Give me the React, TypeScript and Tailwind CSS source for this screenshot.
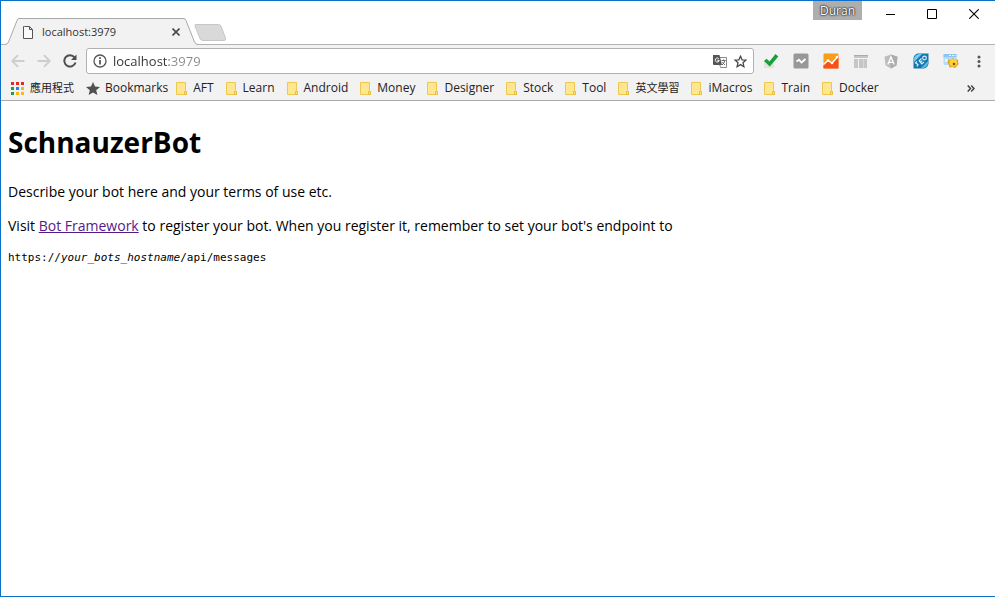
import type { ReactNode } from "react";

const folders = [
  "AFT",
  "Learn",
  "Android",
  "Money",
  "Designer",
  "Stock",
  "Tool",
  "英文學習",
  "iMacros",
  "Train",
  "Docker",
];

const appDots = [
  "#ea2a1c", "#ea2a1c", "#ea2a1c",
  "#1e9e4a", "#2f7de1", "#fbb714",
  "#1e9e4a", "#fbb714", "#fbb714",
];

function AppsIcon() {
  return (
    <svg width="13" height="13" viewBox="0 0 13 13">
      {appDots.map((fill, i) => (
        <rect key={i} x={(i % 3) * 5} y={Math.floor(i / 3) * 5} width="3" height="3" fill={fill} />
      ))}
    </svg>
  );
}

function FolderIcon() {
  return (
    <svg width="11" height="13" viewBox="0 0 11 13">
      <path d="M.5 .5H9.500V8.500L10.500 9.500V12.500H.5Z" fill="#ffe693" stroke="#eec84c" />
      <path d="M8.500 12.500V9.500H10.500V12.500Z" fill="#ffe28a" stroke="#e8be3c" />
    </svg>
  );
}

function ReloadIcon() {
  return (
    <svg width="14" height="14" viewBox="0 0 14 14">
      <path d="M11.500 3.300A5.700 5.700 0 1 0 12.500 8.500" fill="none" stroke="#4e4e4e" strokeWidth="2" />
      <path d="M13.500 .5V6H8Z" fill="#4e4e4e" />
    </svg>
  );
}

function ArrowIcon({ flip }: { flip?: boolean }) {
  return (
    <svg width="14" height="14" viewBox="0 0 14 14" className={flip ? "rotate-180" : ""}>
      <path d="M13.500 7H1.500M7 1.200L1.200 7L7 12.800" fill="none" stroke="#cdcdcd" strokeWidth="1.800" />
    </svg>
  );
}

function TranslateIcon() {
  return (
    <svg width="14" height="13" viewBox="0 0 14 13">
      <path d="M5 2.500H13.500V12.500H7.500Z" fill="#fff" stroke="#8a8a8a" />
      <path d="M8.500 5.500H12.500M10.500 4.500V5.500M12 5.500Q11.500 8 9 10M9.500 7Q10.500 9 12 10" fill="none" stroke="#666" />
      <path d="M0 0H6.500L9 10H1Q0 10 0 9Z" fill="#555" />
      <path d="M5.800 3.800A2 2 0 1 0 6.200 5.300H4.200" fill="none" stroke="#fff" />
    </svg>
  );
}

function SafetyCheckIcon() {
  return (
    <svg width="16" height="16" viewBox="0 0 16 16">
      <path d="M1 7H11V15H1Z" fill="#e5e1d6" />
      <path d="M1 8L3.500 5.700L6.500 8.500L12.500 1L15.300 3.500L6.800 13.500Z" fill="#16a03a" />
    </svg>
  );
}

function GreySquare() {
  return (
    <svg width="16" height="16" viewBox="0 0 16 16">
      <rect x=".5" y=".5" width="15" height="15" rx="1.500" fill="#989898" />
      <path d="M3.500 8.500L6 6.800L8.500 9.500L12.500 6" fill="none" stroke="#fff" strokeWidth="1.800" />
    </svg>
  );
}

function AnalyticsIcon() {
  return (
    <svg width="16" height="16" viewBox="0 0 16 16">
      <rect x=".5" y=".5" width="15" height="15" rx="1" fill="#f89c1c" />
      <path d="M.5 12L5 8L9 10.500L15.500 3V15.500H.5Z" fill="#f4511e" />
      <path d="M.5 11.500L5 7.500L9 10L15 3.500" fill="none" stroke="#fff" strokeWidth="1.400" />
      <circle cx="5" cy="7.500" r="1.300" fill="#fff" />
      <circle cx="9" cy="10" r="1.300" fill="#fff" />
      <circle cx="14" cy="4" r="1.300" fill="#fff" />
    </svg>
  );
}

function TableIcon() {
  return (
    <svg width="14" height="14" viewBox="0 0 14 14" fill="#c6c6c6">
      <path d="M0 1H14V4H0ZM0 5H4V14H0ZM5 5H13V14H5Z" />
      <path d="M0 1H14V2H0Z" fill="#ababab" />
      <path d="M9 5H10V14H9Z" fill="#d6d6d6" />
    </svg>
  );
}

function ShieldIcon() {
  return (
    <svg width="14" height="15" viewBox="0 0 14 15">
      <path d="M7 .5L13.500 2.700L12.500 11.300L7 14.500L1.500 11.300L.5 2.700Z" fill="#bcbcbc" />
      <path d="M7 .5L13.500 2.700L12.500 11.300L7 14.500Z" fill="#acacac" />
      <path d="M3.800 10.500L7 3L10.200 10.500M5 8.300H9" fill="none" stroke="#fff" strokeWidth="1.300" />
    </svg>
  );
}

function SeoIcon() {
  return (
    <svg width="16" height="16" viewBox="0 0 16 16">
      <path d="M4.500 .5H15.500V10.500Q15 14.500 11 15.500H.5V5Q1 1.500 4.500 .5Z" fill="#1277b0" />
      <path d="M1 6Q1.500 2 6 1H9L1 9Z" fill="#7accea" />
      <path d="M8 15L15 8V10.500Q14 14 10.500 15Z" fill="#58b8de" />
      <path d="M4 8.500L2.500 10L5 11.500L4 13.500M8.500 5.500L6.200 7.800L8.800 11L11 9M7.500 9.200L9.200 7.800" fill="none" stroke="#d8eef8" strokeWidth="1.200" />
      <circle cx="11.500" cy="5" r="1.800" fill="none" stroke="#d8eef8" strokeWidth="1.200" />
    </svg>
  );
}

function WindowGearIcon() {
  return (
    <svg width="16" height="16" viewBox="0 0 16 16">
      <rect x=".5" y="1" width="13" height="11" rx="1" fill="#b4dbf8" />
      <path d="M.5 1H13.500V4H.5Z" fill="#8cc4f2" />
      <path d="M6 2.500H8M9 2.500H10.500M11.500 2.500H12.500" stroke="#fff" />
      <path d="M2 6H5V9H2Z" fill="#eaf5fd" />
      <path d="M5 6.500L7.500 7L10 5L12 6.500L15 6.500L15 9L15.700 11L14 13L12 15L9.500 14L6.500 14.500L6 12L4.500 9.500Z" fill="#e0a41c" />
      <circle cx="10.300" cy="9.800" r="3.800" fill="#ffd236" />
      <circle cx="11" cy="11" r="1.300" fill="#7a5510" />
    </svg>
  );
}

const extensions: { name: string; icon: ReactNode }[] = [
  { name: "Safety check", icon: <SafetyCheckIcon /> },
  { name: "Activity", icon: <GreySquare /> },
  { name: "Page analytics", icon: <AnalyticsIcon /> },
  { name: "Table layout", icon: <TableIcon /> },
  { name: "Angular", icon: <ShieldIcon /> },
  { name: "SEO", icon: <SeoIcon /> },
  { name: "Site settings", icon: <WindowGearIcon /> },
];

function TabStrip() {
  return (
    <div className="flex h-11 items-end border-b border-[#b3b3b3] bg-white pl-1">
      <div className="-mb-px flex h-[27px]">
        <svg width="14" height="27" viewBox="0 0 14 27">
          <path d="M0 26.500Q2.500 26.500 3.500 24L12 2.500Q12.800 .5 14 .5V27H0Z" fill="#f2f2f2" />
          <path d="M0 26.500Q2.500 26.500 3.500 24L12 2.500Q12.800 .5 14 .5" fill="none" stroke="#a8a8a8" />
        </svg>
        <div className="flex w-[165px] items-center border-t border-[#a8a8a8] bg-[#f2f2f2] pl-1">
          <svg width="11" height="13" viewBox="0 0 11 13" className="mr-2 shrink-0">
            <path d="M1.500 .5H6.500L9.500 3.500V12.500H.5V.5ZM6.500 .5V3.500H9.500" fill="#fafafa" stroke="#555" />
          </svg>
          <span className="flex-1 text-[11px] leading-4 text-[#333]">localhost:3979</span>
          <button type="button" aria-label="Close tab" className="mr-1">
            <svg width="8" height="8" viewBox="0 0 8 8">
              <path d="M.5 .5L7.500 7.500M7.500 .5L.5 7.500" stroke="#4a4a4a" strokeWidth="1.600" />
            </svg>
          </button>
        </div>
        <svg width="14" height="27" viewBox="0 0 14 27">
          <path d="M14 26.500Q11.500 26.500 10.500 24L2 2.500Q1.200 .5 0 .5V27H14Z" fill="#f2f2f2" />
          <path d="M14 26.500Q11.500 26.500 10.500 24L2 2.500Q1.200 .5 0 .5" fill="none" stroke="#a8a8a8" />
        </svg>
      </div>
      <button type="button" aria-label="New tab" className="-ml-1 mb-[3px]">
        <svg width="33" height="17" viewBox="0 0 33 17">
          <path d="M2 .5H24.500Q26 .5 27 2L31.500 14Q32 16.500 30.500 16.500H9Q7 16.500 6 14.500L1 2Q.5 .5 2 .5Z" fill="#d9d9d9" stroke="#c6c6c6" />
        </svg>
      </button>
      <div className="ml-auto flex items-start self-start">
        <button
          type="button"
          className="mr-[7px] h-[19px] w-[49px] bg-[#aeaeae] text-[12px] leading-5 text-white [text-shadow:0_0_2px_#222,0_0_2px_#222,0_0_1px_#333]"
        >
          Duran
        </button>
        <button type="button" aria-label="Minimize" className="flex h-[26px] w-[42px] items-center justify-center">
          <svg width="9" height="9" viewBox="0 0 9 9"><path d="M0 4.500H9" stroke="#000" /></svg>
        </button>
        <button type="button" aria-label="Maximize" className="flex h-[26px] w-[42px] items-center justify-center">
          <svg width="10" height="10" viewBox="0 0 10 10"><path d="M.5 .5H9.500V9.500H.5Z" fill="none" stroke="#000" /></svg>
        </button>
        <button type="button" aria-label="Close" className="flex h-[26px] w-[42px] items-center justify-center">
          <svg width="10" height="10" viewBox="0 0 10 10"><path d="M.3 .3L9.700 9.700M9.700 .3L.3 9.700" stroke="#000" strokeWidth="1.100" /></svg>
        </button>
      </div>
    </div>
  );
}

function Toolbar() {
  return (
    <div className="flex h-8 items-center pr-[14px] pl-[10px]">
      <div className="flex gap-3">
        <button type="button" aria-label="Back"><ArrowIcon /></button>
        <button type="button" aria-label="Forward"><ArrowIcon flip /></button>
        <button type="button" aria-label="Reload"><ReloadIcon /></button>
      </div>
      <div className="ml-[9px] flex h-[26px] flex-1 items-center rounded-[3px] border border-[#b0b0b0] bg-white px-[6px]">
        <svg width="14" height="14" viewBox="0 0 14 14" className="mr-[6px]">
          <circle cx="7" cy="7" r="6" fill="none" stroke="#555" strokeWidth="1.300" />
          <path d="M7 6V10.500M7 3.300V4.900" stroke="#444" strokeWidth="1.600" />
        </svg>
        {/* the host is dark, the port after it is grey */}
        <input
          type="text"
          aria-label="Address"
          defaultValue="localhost:3979"
          className="min-w-0 flex-1 bg-[linear-gradient(90deg,#333_56px,#8a8a8a_56px)] bg-clip-text text-[13px] leading-5 text-transparent caret-black outline-none"
        />
        <button type="button" aria-label="Translate" className="mr-[7px]"><TranslateIcon /></button>
        <button type="button" aria-label="Bookmark this page">
          <svg width="13" height="13" viewBox="0 0 13 13">
            <path d="M6.500 1.200L8.100 4.800L12 5.100L9 7.700L9.900 11.700L6.500 9.600L3.100 11.700L4 7.700L1 5.100L4.900 4.800Z" fill="none" stroke="#4a4a4a" strokeWidth="1.300" />
          </svg>
        </button>
      </div>
      <div className="ml-[9px] flex gap-[14px]">
        {extensions.map((ext) => (
          <button key={ext.name} type="button" aria-label={ext.name} className="flex h-4 w-4 items-center justify-center">
            {ext.icon}
          </button>
        ))}
      </div>
      <button type="button" aria-label="Menu" className="ml-[18px]">
        <svg width="4" height="13" viewBox="0 0 4 13" fill="#555">
          <circle cx="2" cy="2" r="1.500" />
          <circle cx="2" cy="6.500" r="1.500" />
          <circle cx="2" cy="11" r="1.500" />
        </svg>
      </button>
    </div>
  );
}

function BookmarksBar() {
  return (
    <nav className="flex h-6 items-center border-b border-[#aaa] pb-px pl-[10px] text-[12px] leading-4 whitespace-nowrap text-[#222]">
      <a href="#apps" className="flex items-center gap-[6px] text-[11px]">
        <AppsIcon />
        應用程式
      </a>
      <a href="#bookmarks" className="ml-3 flex items-center gap-[5px]">
        <svg width="14" height="13" viewBox="0 0 14 13">
          <path d="M7 0L9 4.600L14 5L10.200 8.200L11.400 13L7 10.400L2.600 13L3.800 8.200L0 5L5 4.600Z" fill="#505050" />
        </svg>
        Bookmarks
      </a>
      <div className="ml-2 flex items-center gap-3">
        {folders.map((name) => (
          <a
            key={name}
            href={`#${name}`}
            className={name === "英文學習" ? "flex items-center gap-[6px] text-[11px]" : "flex items-center gap-[6px]"}
          >
            <FolderIcon />
            {name}
          </a>
        ))}
      </div>
      <button type="button" aria-label="More bookmarks" className="mr-5 ml-auto">
        <svg width="8" height="7" viewBox="0 0 8 7">
          <path d="M.7 .5L3.500 3.500L.7 6.500M4.200 .5L7 3.500L4.200 6.500" fill="none" stroke="#444" strokeWidth="1.500" />
        </svg>
      </button>
    </nav>
  );
}

export default function App() {
  return (
    <div className="flex min-h-screen flex-col border border-r-0 border-[#0a70ca] bg-white font-['Open_Sans','Noto_Sans_CJK_TC',sans-serif]">
      <header className="bg-[#f2f2f2]">
        <TabStrip />
        <Toolbar />
        <BookmarksBar />
      </header>
      <main className="flex-1 px-[7px] pt-[21px] text-black">
        <h1 className="text-[28px] leading-10 font-bold">SchnauzerBot</h1>
        <p className="mt-5 text-[14px] leading-5">Describe your bot here and your terms of use etc.</p>
        <p className="mt-[14px] text-[14px] leading-5">
          Visit{" "}
          <a href="#bot-framework" className="text-[#551a8b] underline">
            Bot Framework
          </a>{" "}
          to register your bot. When you register it, remember to set your bot's endpoint to
        </p>
        <p className="mt-[14px] font-['DejaVu_Sans_Mono',monospace] text-[11px] leading-4">
          https://<i>your_bots_hostname</i>/api/messages
        </p>
      </main>
    </div>
  );
}
